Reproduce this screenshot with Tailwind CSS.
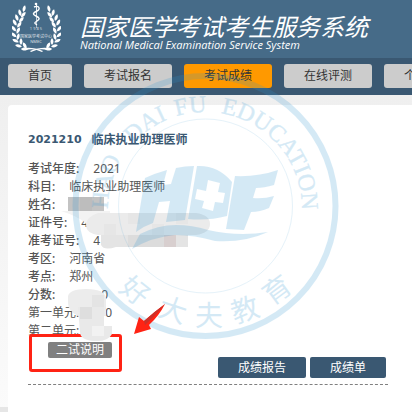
<!DOCTYPE html>
<html lang="zh-CN">
<head>
  <meta charset="UTF-8" />
  <meta name="viewport" content="width=device-width, initial-scale=1.0"/>
  <title>国家医学考试考生服务系统</title>
  <script src="https://cdn.jsdelivr.net/npm/@tailwindcss/browser@4"></script>
</head>
<body class="relative min-h-screen overflow-hidden flex flex-col bg-[#efefef] text-xs text-[#555] font-['Noto_Sans','Noto_Sans_CJK_SC',sans-serif]">

  <!-- Header -->
  <header class="h-[58px] shrink-0 flex bg-[#466b88] text-white pl-3 gap-[19px]">
    <svg class="w-[49px] h-[54px] shrink-0" viewBox="12 0 49 54" fill="#fff" aria-hidden="true">
      <defs>
        <g id="leaf"><path d="M0-4C2-2 2 1 0 3C-2 1-2-2 0-4Z"/></g>
        <g id="branch">
          <use href="#leaf" transform="translate(24 9) rotate(15)"/>
          <use href="#leaf" transform="translate(20 13) rotate(-15)"/>
          <use href="#leaf" transform="translate(23 15) rotate(40)"/>
          <use href="#leaf" transform="translate(17 18) rotate(-20)"/>
          <use href="#leaf" transform="translate(21 20) rotate(40)"/>
          <use href="#leaf" transform="translate(15 23) rotate(-30)"/>
          <use href="#leaf" transform="translate(19 25) rotate(35)"/>
          <use href="#leaf" transform="translate(14 29) rotate(-40)"/>
          <use href="#leaf" transform="translate(18 31) rotate(25)"/>
          <use href="#leaf" transform="translate(14 35) rotate(-50)"/>
          <use href="#leaf" transform="translate(18 37) rotate(15)"/>
          <use href="#leaf" transform="translate(16 41) rotate(-65)"/>
          <use href="#leaf" transform="translate(21 42) rotate(0)"/>
          <use href="#leaf" transform="translate(19 46) rotate(-75)"/>
          <use href="#leaf" transform="translate(25 46) rotate(-30)"/>
          <use href="#leaf" transform="translate(25 49) rotate(-90)"/>
          <path d="M25 48Q33 47 43 51L42 52Q34 48 26 50Z"/>
        </g>
      </defs>
      <use href="#branch"/>
      <use href="#branch" transform="translate(73 0) scale(-1 1)"/>
      <path d="M36 3h1l-.3 25h-.5z"/>
      <circle cx="36" cy="4" r="1.3"/>
      <path d="M34 7C39 5 41 9 37 11S32 14 36 16S40 19 37 21S34 23 37 25" fill="none" stroke="#fff" stroke-width="1.4"/>
      <text x="36" y="30" font-size="4" text-anchor="middle" opacity=".7">1 9 8 5</text>
      <text x="36" y="38" font-size="4" text-anchor="middle" opacity=".8">国家医学考试中心</text>
      <text x="36" y="43" font-size="4" text-anchor="middle" opacity=".8">NMEC</text>
    </svg>
    <div class="pt-[15px] italic whitespace-nowrap">
      <h1 class="text-[24px] leading-6">国家医学考试考生服务系统</h1>
      <p class="text-[11px] leading-3 font-medium font-['Open_Sans',sans-serif]">National Medical Examination Service System</p>
    </div>
  </header>

  <!-- Navigation -->
  <nav class="flex shrink-0 gap-3 bg-[#3a5872] px-2 pt-[6px] pb-[7px] overflow-hidden whitespace-nowrap text-[#333]">
    <a href="#" class="h-6 leading-6 px-5 shrink-0 rounded-[3px] bg-[#ccc]">首页</a>
    <a href="#" class="h-6 leading-6 px-5 shrink-0 rounded-[3px] bg-[#ccc]">考试报名</a>
    <a href="#" class="h-6 leading-6 px-5 shrink-0 rounded-[3px] bg-[#ff9900]">考试成绩</a>
    <a href="#" class="h-6 leading-6 px-5 shrink-0 rounded-[3px] bg-[#ccc]">在线评测</a>
    <a href="#" class="h-6 leading-6 px-5 shrink-0 rounded-[3px] bg-[#ccc]">个人信息</a>
  </nav>

  <!-- Result card -->
  <div class="grow flex flex-col pt-[10px] pl-2 bg-linear-to-b from-[#efefef] to-[#fbfbfb]">
    <main class="grow rounded-tl-[4px] bg-white pl-5 pr-6 pt-[26px]">
      <h2 class="flex items-center gap-[10px] leading-[18px] font-bold text-[#3a5872]">
        <span class="text-[11px] font-['DejaVu_Sans',sans-serif]">2021210</span>
        <span>临床执业助理医师</span>
      </h2>

      <dl class="mt-[11px] leading-[18px] whitespace-nowrap">
        <div class="flex gap-[14px]"><dt class="font-medium">考试年度:</dt><dd>2021</dd></div>
        <div class="flex gap-[14px]"><dt class="font-medium">科目:</dt><dd>临床执业助理医师</dd></div>
        <div class="flex gap-[14px]"><dt class="font-medium">姓名:</dt><dd></dd></div>
        <div class="flex gap-[14px]"><dt class="font-medium">证件号:</dt><dd>4</dd></div>
        <div class="flex gap-[14px]"><dt class="font-medium">准考证号:</dt><dd>4</dd></div>
        <div class="flex gap-[14px]"><dt class="font-medium">考区:</dt><dd>河南省</dd></div>
        <div class="flex gap-[14px]"><dt class="font-medium">考点:</dt><dd>郑州</dd></div>
        <div class="flex gap-[14px]"><dt class="font-medium">分数:</dt><dd class="pl-8">0</dd></div>
        <div class="flex gap-[14px]"><dt>第一单元:</dt><dd class="pl-3">0</dd></div>
        <div class="flex gap-[14px]"><dt>第二单元:</dt><dd></dd></div>
      </dl>

      <div class="flex justify-between h-9 mt-[2px] pr-[2px] text-white">
        <div class="relative self-start ml-5">
          <button type="button" class="block h-4 leading-4 px-2 rounded-[2px] bg-[#808080]">二试说明</button>
          <span class="absolute -left-[19px] -top-2 w-[93px] h-[38px] border-[3px] border-[#ff2314] rounded-[3px]"></span>
        </div>
        <div class="flex gap-1 self-end">
          <button type="button" class="h-[21px] leading-[21px] px-5 rounded-[2px] bg-[#3a5872]">成绩报告</button>
          <button type="button" class="h-[21px] leading-[21px] px-5 rounded-[2px] bg-[#3a5872]">成绩单</button>
        </div>
      </div>
      <div class="mt-[6px] border-t border-dashed border-[#808080]"></div>
    </main>
  </div>

  <!-- Masked values, watermark and arrow drawn over the page -->
  <svg class="absolute left-0 top-0 w-[412px] h-[412px] pointer-events-none" viewBox="0 0 412 412" aria-hidden="true">
    <path d="M0 407h8v5h-8z" fill="#e6e6e6"/>
    <g>
      <path d="M61 211h49v18h-20q-4-10-29-18z" fill="#f3f3f3"/>
      <path d="M68 197h36v14h-36z" fill="#c3c3c3"/>
      <path d="M80 197h12v14h-12z" fill="#bdbdbd"/>
      <path d="M98 213h98q14 2 14 11t-14 11h-98q-12-2-12-10t12-12z" fill="#ebebeb"/>
      <path d="M104 224h12v11h-12zM128 213h12v11h-12zM152 224h12v11h-12zM176 213h12v11h-12z" fill="#e6e6e6"/>
      <path d="M101 235h87v12h-72q-12 4-15-2z" fill="#e4e4e4"/>
      <path d="M128 235h36v12h-36z" fill="#dcdcdc"/>
      <path d="M164 235h12v12h-12z" fill="#d8cfcf"/>
      <path d="M68 296q2-7 18-7q20 0 20 10v17h-28q-10-5-10-13z" fill="#ececec"/>
      <path d="M92 295h12v12h-12z" fill="#e4e4e4"/>
      <path d="M78 307h26v19h8v8q-4 8-18 7q-14-1-14-9z" fill="#e9e9e9"/>
      <path d="M80 307h12v12h-12z" fill="#dedede"/>
      <path d="M92 326h12v10h-12z" fill="#f2f2f2"/>
    </g>
    <g fill="#2f96d2" opacity=".2">
      <circle cx="205.500" cy="206" r="130" fill="none" stroke="#2f96d2" stroke-width="6"/>
      <circle cx="205.500" cy="206" r="87" fill="none" stroke="#2f96d2" stroke-width="1" opacity=".6"/>
      <path id="ring" d="M108 209A97 97 0 0 1 302 209" fill="none"/>
      <g font-family="Liberation Serif, serif" font-size="24" stroke="#2f96d2" stroke-width=".4">
        <text><textPath href="#ring" startOffset="0">HAO</textPath></text>
        <text><textPath href="#ring" startOffset="71">DAI</textPath></text>
        <text><textPath href="#ring" startOffset="123">FU</textPath></text>
        <text><textPath href="#ring" startOffset="168">EDUCATION</textPath></text>
      </g>
      <g font-family="Noto Sans CJK SC, sans-serif" font-size="28" text-anchor="middle">
        <text transform="translate(135 291) rotate(38)" y="10">好</text>
        <text transform="translate(173 310) rotate(18)" y="10">大</text>
        <text transform="translate(209 316)" y="10">夫</text>
        <text transform="translate(245 310) rotate(-18)" y="10">教</text>
        <text transform="translate(277 290) rotate(-36)" y="10">育</text>
      </g>
      <!-- HDF mark -->
      <path d="M145 178Q156 173 167 170L163 185L171 184L176 168Q185 166 194 166L185 220L166 222L170 201L159 202L153 223Q144 226 136 232Z"/>
      <path fill-rule="evenodd" d="M197 166Q218 165 232 182L227 216Q208 221 188 219ZM208 180L206 191L197 189L195 199L204 201L202 208L213 211L215 202L223 203L225 193L218 192L220 183Z"/>
      <path d="M235 176Q258 177 278 170L274 185Q264 188 256 188L253 198Q264 199 274 196L269 208Q260 212 251 212L244 230L226 229Z"/>
      <path d="M140 234Q158 225 176 225Q192 225 208 230Q238 237 268 232Q244 243 215 241Q195 235 175 235Q152 237 132 249Z"/>
    </g>
    <path d="M134 334L139 317L144 321Q154 312 165 304Q159 316 149 325L151 329Z" fill="#ff2314"/>
    <path d="M144 321Q154 312 165 304Q157 314 145 325Z" fill="#cc3029"/>
  </svg>

</body>
</html>
